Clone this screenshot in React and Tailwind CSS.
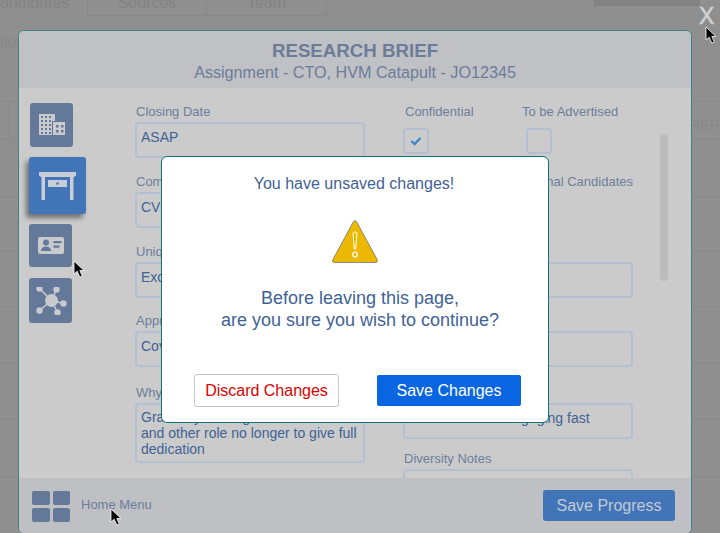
const FONT = "font-['Liberation_Sans',Arial,sans-serif]";

function Field({ label, value, className = "h-9 pt-[5px]" }) {
  return (
    <div className="flex shrink-0 flex-col">
      <label className="h-[22px] pl-px pt-px text-[13px] leading-[22px] text-[#6c7d9b]">{label}</label>
      <div className={`${className} rounded border-2 border-[#b3c0d2] px-[4px] text-sm leading-[16px] text-[#3f6296]`}>
        {value}
      </div>
    </div>
  );
}

function Checkbox({ checked }) {
  return (
    <div className="flex h-[26px] w-[26px] items-center justify-center rounded border-2 border-[#b3c0d2]">
      {checked && (
        <svg width="12" height="10" viewBox="0 0 12 10">
          <path d="M1.5 5 L4.5 8 L10.5 2" fill="none" stroke="#3f84cc" strokeWidth="2.4" />
        </svg>
      )}
    </div>
  );
}

function Building() {
  return (
    <svg width="26" height="22" viewBox="0 0 26 22" fill="#c8cace">
      <path fillRule="evenodd" d="M0 0H16V7H13V21H0Z" />
      <path d="M14 8H26V21H14Z" />
      <g fill="#64799a">
        {[2, 6, 10].map((x) =>
          [2, 6, 10, 14, 18].map((y) => <rect key={x + "-" + y} x={x} y={y} width="2" height="2" />)
        )}
        {[17, 22].map((x) => [11, 16].map((y) => <rect key={x + "-" + y} x={x} y={y} width="2.5" height="2.5" />))}
      </g>
    </svg>
  );
}

function Desk() {
  return (
    <svg width="38" height="28" viewBox="0 0 38 28">
      <path d="M0 0H37V3.500L35 5H2L0 3.500Z" fill="#c8cdd6" />
      <rect x="2.500" y="5" width="3.500" height="23" fill="#c8cdd6" />
      <rect x="31" y="5" width="3.500" height="23" fill="#c8cdd6" />
      <rect x="9" y="8" width="19" height="7" fill="#c8cdd6" />
      <circle cx="18.500" cy="11.500" r="1.300" fill="#4274b8" />
    </svg>
  );
}

function IdCard() {
  return (
    <svg width="26" height="17" viewBox="0 0 26 17">
      <rect width="26" height="17" rx="2" fill="#c8cace" />
      <circle cx="8" cy="5.500" r="3" fill="#64799a" />
      <path d="M3 14c0-3 2-4.500 5-4.500s5 1.500 5 4.500Z" fill="#64799a" />
      <rect x="15.500" y="4" width="8" height="2.200" fill="#64799a" />
      <rect x="15.500" y="8.500" width="6" height="2.200" fill="#64799a" />
    </svg>
  );
}

function Network() {
  const nodes = [[4.5, 1.5], [21.5, 2.5], [28.5, 16.5], [22.5, 25.5], [4.5, 23.5]];
  return (
    <svg width="32" height="28" viewBox="0 0 32 28" fill="#c8cace">
      {nodes.map(([x, y]) => (
        <g key={x + "-" + y}>
          <line x1="16.500" y1="13.500" x2={x} y2={y} stroke="#c8cace" strokeWidth="1.500" />
          <circle cx={x} cy={y} r="3.200" />
        </g>
      ))}
      <circle cx="16.500" cy="13.500" r="6.500" />
    </svg>
  );
}

function Cursor({ className }) {
  return (
    <svg className={`absolute ${className}`} width="14" height="19" viewBox="0 0 14 19">
      <path d="M1 1 L1 14 L4.200 11.200 L6.800 17 L9.300 16 L6.800 10.500 L11 10.500 Z" fill="#000" stroke="#fff" strokeWidth="0.800" />
    </svg>
  );
}

function Warning() {
  return (
    <svg width="46" height="44" viewBox="0 0 46 44">
      <path d="M23 2 L44.500 41 L1.500 41 Z" fill="#edb900" stroke="#edb900" strokeWidth="3" strokeLinejoin="round" />
      <path d="M23 .9 Q21.800 .9 21 2.400 L1 39.500 Q0 42.500 3 42.500 L43 42.500 Q46 42.500 45 39.500 L25 2.400 Q24.200 .9 23 .9Z" fill="none" stroke="#8a8a80" strokeWidth="1" />
      <path d="M21 13 Q23 10.500 25 13 L23.700 29 L22.300 29 Z" fill="none" stroke="#fff" strokeWidth="1" />
      <circle cx="23" cy="34.500" r="2.300" fill="none" stroke="#fff" strokeWidth="1.200" />
    </svg>
  );
}

function SideButton({ children, className }) {
  return <div className={`flex items-center justify-center rounded-[3px] ${className}`}>{children}</div>;
}

export default function App() {
  return (
    <div className={`relative h-[533px] w-[720px] overflow-hidden bg-[#8f8f8f] ${FONT}`}>
      {/* page dimmed behind the panel */}
      <div className="flex h-[16px] text-base text-[#838383]">
        <div className="h-[16px] w-[87px] overflow-hidden pr-[19px] text-right leading-[6px]">andidates</div>
        <div className="h-[16px] w-[120px] overflow-hidden border border-t-0 border-[#888888] text-center leading-[6px]">Sources</div>
        <div className="h-[16px] w-[120px] overflow-hidden border border-t-0 border-l-0 border-[#888888] text-center leading-[6px]">Team</div>
      </div>
      <div className="mt-[85px] flex flex-col">
        <div className="h-[39px] border-y border-[#898989]"><div className="ml-2 h-full w-px bg-[#898989]" /></div>
        <div className="h-[57px] border-b border-[#898989]" />
        <div className="h-[55px] border-b border-[#898989]" />
        <div className="h-[55px] border-b border-[#898989]" />
        <div className="h-[57px] border-b border-[#898989]" />
        <div className="h-[56px] border-b border-[#898989]" />
        <div className="h-[57px] border-b border-[#898989]" />
      </div>
      <div className="absolute right-[20px] top-0 h-[6px] w-[106px] bg-[#838383]" />
      <div className="absolute left-0 top-[31px] text-[15px] text-[#878787]">tion</div>
      <div className="absolute right-0 top-[114px] text-[15px] text-[#888888]">REP</div>

      {/* research brief panel */}
      <section className="absolute left-[18px] top-[30px] flex h-[504px] w-[674px] flex-col overflow-hidden rounded-md border border-[#3a8583] bg-[#cbcbcb]">
        <header className="flex h-[57px] shrink-0 flex-col items-center bg-[#c0c1c5] pt-[9px]">
          <h1 className="text-[18.700px] font-bold leading-[22px] text-[#6b7c99]">RESEARCH BRIEF</h1>
          <p className="text-[16.150px] leading-[21px] text-[#6b7c99]">Assignment - CTO, HVM Catapult - JO12345</p>
        </header>

        <div className="flex h-[390px] shrink-0 overflow-hidden">
          <div className="flex w-[116px] flex-col items-start pl-[10px] pt-[15px]">
            <SideButton className="ml-px h-[44px] w-[43px] bg-[#64799a]"><Building /></SideButton>
            <SideButton className="mt-[10px] h-[57px] w-[57px] bg-[#4274b8] shadow-[-3px_4px_5px_rgba(0,0,0,0.45)]"><Desk /></SideButton>
            <SideButton className="mt-[10px] h-[43px] w-[43px] bg-[#64799a]"><IdCard /></SideButton>
            <SideButton className="mt-[11px] h-[45px] w-[43px] bg-[#64799a]"><Network /></SideButton>
          </div>

          <div className="flex w-[230px] flex-col pt-3">
            <Field label="Closing Date" value="ASAP" />
            <div className="mt-[12px]"><Field label="Compensation" value="CV to follow" /></div>
            <div className="mt-[12px]"><Field label="Unique Selling Points" value="Excellent brand" /></div>
            <div className="mt-[11px]"><Field label="Approach" value="Cover all markets" /></div>
            <div className="mt-[14px]">
              <Field
                label="Why is the role open?"
                value={<>Gradually moving on from current<br />and other role no longer to give full<br />dedication</>}
                className="h-[60px] pt-1"
              />
            </div>
          </div>

          <div className="ml-[38px] flex w-[230px] flex-col pt-3">
            <div className="flex h-[70px] shrink-0">
              <div className="w-[119px]">
                <div className="h-[22px] pl-[2px] pt-px text-[13px] leading-[22px] text-[#6c7d9b]">Confidential</div>
                <div className="mt-[6px]"><Checkbox checked /></div>
              </div>
              <div>
                <div className="h-[22px] pt-px text-[13px] leading-[22px] text-[#6c7d9b]">To be Advertised</div>
                <div className="ml-[4px] mt-[6px]"><Checkbox /></div>
              </div>
            </div>
            <div className="flex h-[70px] shrink-0">
              <div className="w-[119px]" />
              <div>
                <div className="h-[22px] whitespace-nowrap pt-px text-[13px] leading-[22px] text-[#6c7d9b]">Additional Candidates</div>
                <div className="ml-[4px] mt-[6px]"><Checkbox /></div>
              </div>
            </div>
            <Field label="Location" value="" />
            <div className="mt-[11px]"><Field label="Industry" value="" /></div>
            <div className="mt-[14px]"><Field label="Key Priorities" value="Team leader of engaging fast" /></div>
            <div className="mt-[8px]"><Field label="Diversity Notes" value="" /></div>
          </div>

          <div className="ml-[27px] mt-[46px] h-[147px] w-2 shrink-0 rounded-full bg-[#bcbcbc]" />
        </div>

        <footer className="flex h-[55px] shrink-0 items-start bg-[#bfc0c4] pl-[13px] pr-4 pt-3">
          <div className="mt-px grid grid-cols-[18px_17px] grid-rows-[14px_14px] gap-[3px]">
            <span className="h-[14px] rounded-[2px] bg-[#64799a]" />
            <span className="h-[14px] rounded-[2px] bg-[#64799a]" />
            <span className="h-[14px] rounded-[2px] bg-[#64799a]" />
            <span className="h-[14px] rounded-[2px] bg-[#64799a]" />
          </div>
          <span className="ml-[11px] mt-[4px] text-[13px] leading-[22px] text-[#6c7d9b]">Home Menu</span>
          <button className="ml-auto h-[31px] w-[132px] rounded-[3px] bg-[#4274b8] text-base text-[#c3cad6]">Save Progress</button>
        </footer>
      </section>

      <div className="absolute left-[699px] top-[3px] text-[23px] leading-[26px] text-[#d2d2d2] [-webkit-text-stroke:0.5px_#d2d2d2]">X</div>

      {/* unsaved changes dialog */}
      <div className="absolute left-[161px] top-[156px] flex h-[267px] w-[388px] flex-col items-center rounded-md border border-[#0d7377] bg-white text-[#3f6296]">
        <p className="mr-[2px] mt-[17px] text-base leading-[20px]">You have unsaved changes!</p>
        <div className="mt-[26px]"><Warning /></div>
        <p className="ml-[10px] mt-[23px] text-center text-lg leading-[22px]">
          Before leaving this page,<br />are you sure you wish to continue?
        </p>
        <div className="mt-[43px] flex w-full items-start pl-[32px]">
          <button className="h-[33px] w-[145px] rounded-[3px] border border-[#c6c6c6] text-base text-[#dc0000]">Discard Changes</button>
          <button className="ml-[38px] mt-px h-[31px] w-[144px] rounded-[2px] bg-[#0a66e0] text-base text-white">Save Changes</button>
        </div>
      </div>

      <Cursor className="left-[705px] top-[26px]" />
      <Cursor className="left-[73px] top-[260px]" />
      <Cursor className="left-[110px] top-[508px]" />
    </div>
  );
}
